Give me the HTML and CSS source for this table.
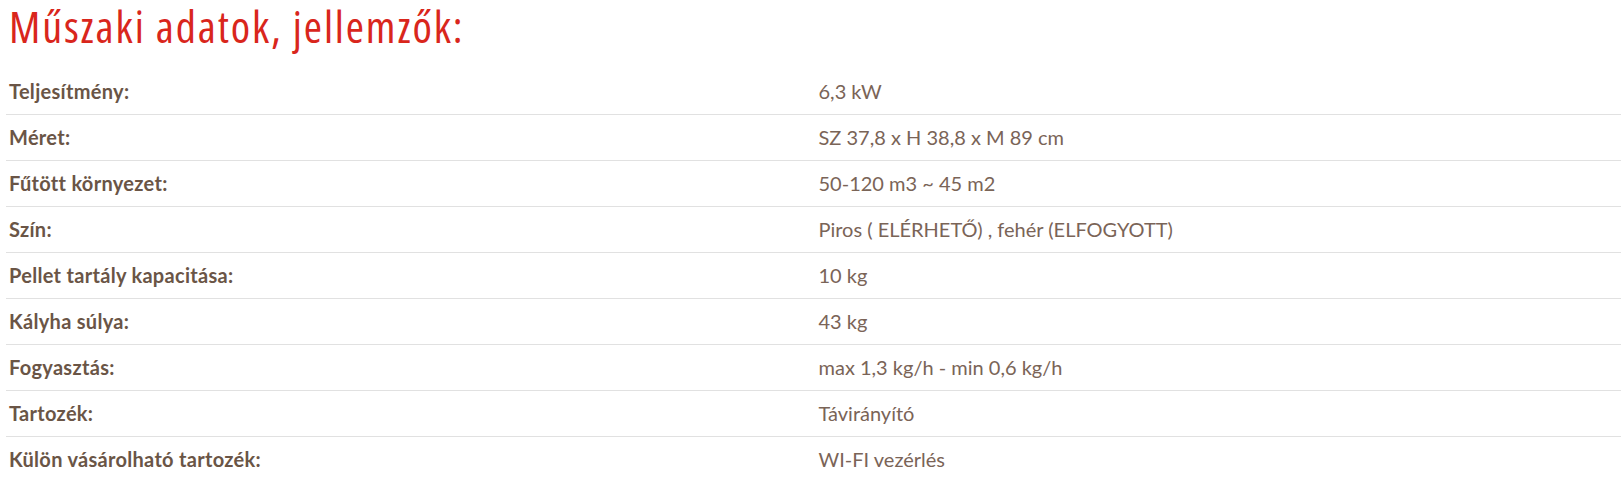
FILE: index.html
```html
<!DOCTYPE html>
<html lang="hu">
<head>
<meta charset="utf-8">
<link rel="stylesheet" href="styles.css">
</head>
<body>
<div class="specs">
  <h2 class="specs-title">Műszaki adatok, jellemzők:</h2>
  <table class="specs-table">
    <tbody>
      <tr><th>Teljesítmény:</th><td>6,3 kW</td></tr>
      <tr><th>Méret:</th><td>SZ 37,8 x H 38,8 x M 89 cm</td></tr>
      <tr><th>Fűtött környezet:</th><td>50-120 m3 ~ 45 m2</td></tr>
      <tr><th>Szín:</th><td>Piros ( ELÉRHETŐ) , fehér (ELFOGYOTT)</td></tr>
      <tr><th>Pellet tartály kapacitása:</th><td>10 kg</td></tr>
      <tr><th>Kályha súlya:</th><td>43 kg</td></tr>
      <tr><th>Fogyasztás:</th><td>max 1,3 kg/h - min 0,6 kg/h</td></tr>
      <tr><th>Tartozék:</th><td>Távirányító</td></tr>
      <tr><th>Külön vásárolható tartozék:</th><td>WI-FI vezérlés</td></tr>
    </tbody>
  </table>
</div>
</body>
</html>
```
FILE: styles.css
```css
html, body {
  margin: 0;
  padding: 0;
  background: #ffffff;
}
.specs {
  padding: 0 0 0 6px;
}
.specs-title {
  margin: 0 0 16px 3px;
  padding: 0;
  font-family: "Open Sans", sans-serif;
  font-stretch: 75%;
  font-weight: 400;
  font-size: 44px;
  line-height: 52px;
  letter-spacing: 1.9px;
  color: #d9261c;
}
.specs-table {
  width: 100%;
  border-collapse: collapse;
  table-layout: fixed;
}
.specs-table tr {
  height: 46px;
}
.specs-table tr + tr {
  border-top: 1px solid #e1e1e1;
}
.specs-table th,
.specs-table td {
  padding: 0 3px;
  text-align: left;
  vertical-align: middle;
  font-size: 20px;
}
.specs-table th {
  font-family: Lato, "Noto Sans", sans-serif;
  font-weight: 700;
  color: #6a5546;
  letter-spacing: 0.3px;
}
.specs-table td {
  font-family: Lato, "Noto Sans", sans-serif;
  font-weight: 400;
  color: #7a6457;
  padding-left: 5px;
}
```
